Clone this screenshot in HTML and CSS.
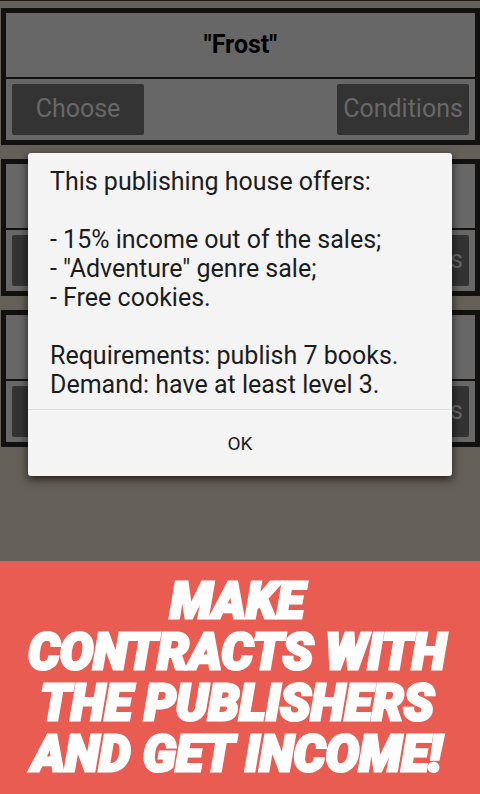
FILE: index.html
```html
<!DOCTYPE html>
<html lang="en">
<head>
<meta charset="UTF-8">
<meta name="viewport" content="width=device-width, initial-scale=1.0">
<title>Publishers</title>
<link rel="stylesheet" href="styles.css">
</head>
<body>
<main class="screen">
    <div class="list">
        <section class="card">
            <h2>"Frost"</h2>
            <div class="actions">
                <button type="button">Choose</button>
                <button type="button">Conditions</button>
            </div>
        </section>
        <section class="card">
            <h2></h2>
            <div class="actions">
                <button type="button">Choose</button>
                <button type="button">Conditions</button>
            </div>
        </section>
        <section class="card">
            <h2></h2>
            <div class="actions">
                <button type="button">Choose</button>
                <button type="button">Conditions</button>
            </div>
        </section>
    </div>
    <!-- Conditions popup -->
    <div class="overlay">
        <div class="dialog" role="dialog" aria-label="Conditions">
            <div class="message">
                <p>This publishing house offers:</p>
                <p>- 15% income out of the sales;<br>
                - "Adventure" genre sale;<br>
                - Free cookies.</p>
                <p>Requirements: publish 7 books.<br>
                Demand: have at least level 3.</p>
            </div>
            <button type="button" class="ok">OK</button>
        </div>
    </div>
</main>
<footer class="banner">
    <h1>MAKE<br>CONTRACTS WITH<br>THE PUBLISHERS<br>AND GET INCOME!</h1>
</footer>
</body>
</html>
```

FILE: styles.css
```css
* {
    box-sizing: border-box;
}
body {
    margin: 0;
    min-height: 100vh;
    display: flex;
    flex-direction: column;
    font-family: Roboto, sans-serif;
}
h1, h2, p {
    margin: 0;
}
button {
    font-family: inherit;
    border: none;
    cursor: pointer;
}
.screen {
    position: relative;
    flex: 1;
    background-color: #645f58;
    border-top: 1px solid #1d1a14;
}
.list {
    display: flex;
    flex-direction: column;
    gap: 14px;
    padding: 7px 0 0 1px;
}
.card {
    background-color: #676767;
    border: 5px solid #131110;
}
.card h2 {
    height: 66px;
    border-bottom: 2px solid #131110;
    font-size: 25px;
    font-weight: bold;
    line-height: 64px;
    text-align: center;
    color: #000;
}
.actions {
    display: flex;
    justify-content: space-between;
    padding: 5px 6px;
}
.actions button {
    width: 132px;
    height: 51px;
    padding: 0 0 3px;
    border-radius: 2px;
    background-color: #333;
    color: #686868;
    font-size: 25px;
}
.overlay {
    position: absolute;
    inset: 0;
    padding: 152px 28px 0;
}
.dialog {
    background-color: #f4f4f4;
    border-radius: 3px;
    box-shadow: 0 3px 10px rgba(0, 0, 0, 0.7);
}
.message {
    display: flex;
    flex-direction: column;
    gap: 29px;
    padding: 14px 22px 10px;
    border-bottom: 1px solid #e0e0e0;
    font-size: 25px;
    line-height: 29px;
    color: #1c1c1c;
}
.ok {
    display: block;
    width: 100%;
    height: 66px;
    background: none;
    font-size: 19px;
    color: #1c1c1c;
}
.banner {
    padding: 15px 18px 14px 12px;
    background-color: #e85c52;
}
.banner h1 {
    font-size: 50px;
    font-weight: 900;
    font-style: italic;
    line-height: 51px;
    text-align: center;
    white-space: nowrap;
    color: #fff;
    -webkit-text-stroke: 3px #fff;
}
```
